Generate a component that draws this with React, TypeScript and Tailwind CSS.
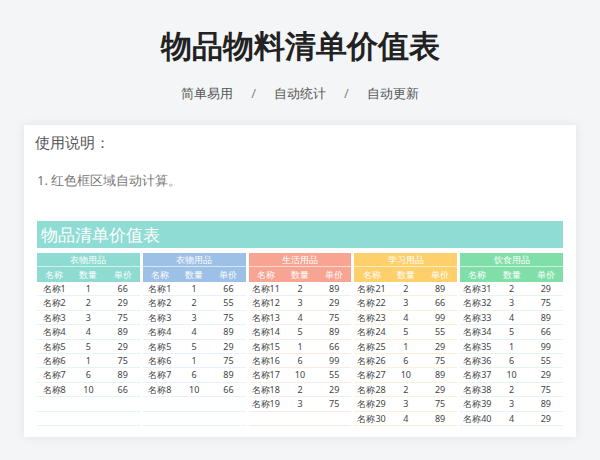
const groups = [
  { title: "衣物用品", head: "bg-[#8ddbd1]", line: "border-[#e6f4f2]", rows: [["名称1",1,66],["名称2",2,29],["名称3",3,75],["名称4",4,89],["名称5",5,29],["名称6",1,75],["名称7",6,89],["名称8",10,66]] },
  { title: "衣物用品", head: "bg-[#9dc0e6]", line: "border-[#eaf0f7]", rows: [["名称1",1,66],["名称2",2,55],["名称3",3,75],["名称4",4,89],["名称5",5,29],["名称6",1,75],["名称7",6,89],["名称8",10,66]] },
  { title: "生活用品", head: "bg-[#f7a592]", line: "border-[#f8ece8]", rows: [["名称11",2,89],["名称12",3,29],["名称13",4,75],["名称14",5,89],["名称15",1,66],["名称16",6,99],["名称17",10,55],["名称18",2,29],["名称19",3,75]] },
  { title: "学习用品", head: "bg-[#fdd06b]", line: "border-[#fbf1d8]", rows: [["名称21",2,89],["名称22",3,66],["名称23",4,99],["名称24",5,55],["名称25",1,29],["名称26",6,75],["名称27",10,89],["名称28",2,29],["名称29",3,75],["名称30",4,89]] },
  { title: "饮食用品", head: "bg-[#80dfa8]", line: "border-[#e5f5ec]", rows: [["名称31",2,29],["名称32",3,75],["名称33",4,89],["名称34",5,66],["名称35",1,99],["名称36",6,55],["名称37",10,29],["名称38",2,75],["名称39",3,89],["名称40",4,29]] },
];

export default function App() {
  return (
    <div className="w-[600px] h-[460px] overflow-hidden bg-[#f4f5f7] font-['Noto_Sans_CJK_SC',sans-serif]">
      <h1 className="pt-[25px] text-center text-[31px] leading-[40px] font-bold text-[#222]">物品物料清单价值表</h1>
      <div className="mt-[19px] flex justify-center gap-[18px] text-[13px] leading-[18px] text-[#555]">
        <span>简单易用</span><span className="text-[#888]">/</span><span>自动统计</span><span className="text-[#888]">/</span><span>自动更新</span>
      </div>
      <div className="mx-[24px] mt-[23px] h-[312px] bg-white shadow-[0_0_10px_rgba(0,0,0,0.08)] px-[13px] pt-[6px]">
        <div className="text-[15px] leading-[22px] text-[#555] -ml-[2px]">使用说明：</div>
        <div className="mt-[18px] text-[13px] leading-[18px] text-[#777]">1. 红色框区域自动计算。</div>
        <div className="mt-[32px] h-[27px] bg-[#8fdcd4] text-white text-[17px] leading-[27px] pl-[4px]">物品清单价值表</div>
        <div className="mt-[5px] flex gap-[3px]">
          {groups.map((g, i) => (
            <div key={i} className="flex-1 text-[9px] text-[#444]">
              <div className={`${g.head} text-white text-center h-[14px] leading-[14px] border-b border-white/60`}>{g.title}</div>
              <div className={`${g.head} text-white grid grid-cols-3 text-center h-[15px] leading-[15px]`}>
                <span>名称</span><span>数量</span><span>单价</span>
              </div>
              {Array.from({ length: 10 }).map((_, r) => {
                const row = g.rows[r];
                return (
                  <div key={r} className={`grid grid-cols-3 text-center h-[14.4px] leading-[14px] border-b ${g.line}`}>
                    {row ? <><span>{row[0]}</span><span>{row[1]}</span><span>{row[2]}</span></> : null}
                  </div>
                );
              })}
            </div>
          ))}
        </div>
      </div>
    </div>
  );
}
